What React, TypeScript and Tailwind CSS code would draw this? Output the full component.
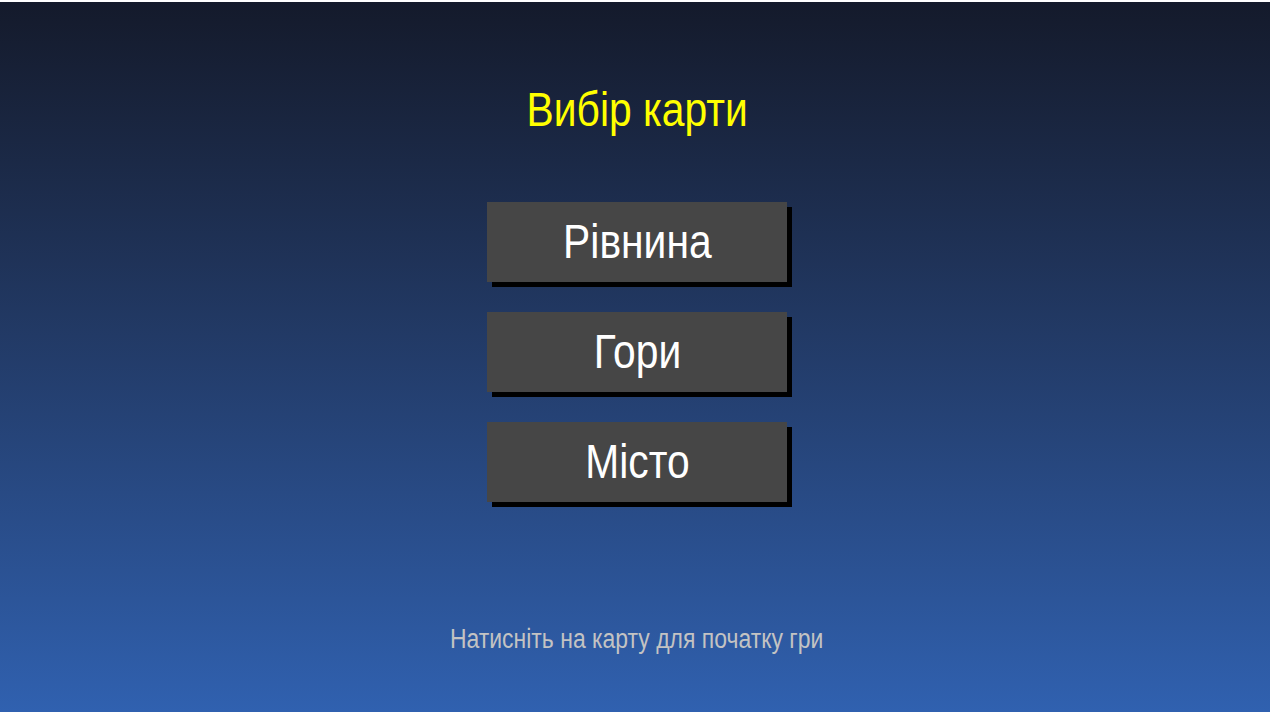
import React from "react";

const maps = ["Рівнина", "Гори", "Місто"];

// no narrow face installed, so Liberation Sans is squeezed horizontally
const narrow = "inline-block scale-x-[0.85]";

export default function App() {
  return (
    <div
      className="flex h-[712px] w-full flex-col items-center bg-gradient-to-b from-[#141a2b] to-[#3061b0] pl-1 text-white"
      style={{ fontFamily: '"Liberation Sans", Arial, sans-serif' }}
    >
      <div className="-ml-1 h-[2px] w-[calc(100%+4px)] bg-white" />

      <h1 className="mt-[84px] text-[48px] leading-[48px] text-[#ffff00]">
        <span className={narrow}>Вибір карти</span>
      </h1>

      <div className="mt-[68px] flex flex-col gap-[30px]">
        {maps.map((name) => (
          <button
            key={name}
            className="flex h-[80px] w-[300px] items-center justify-center bg-[#464646] text-[48px] leading-[48px] text-white shadow-[5px_5px_0_#000]"
          >
            <span className={narrow}>{name}</span>
          </button>
        ))}
      </div>

      <p className="mt-[124px] text-[27px] leading-[27px] text-[#c3c3c3]">
        <span className={narrow}>Натисніть на карту для початку гри</span>
      </p>
    </div>
  );
}
